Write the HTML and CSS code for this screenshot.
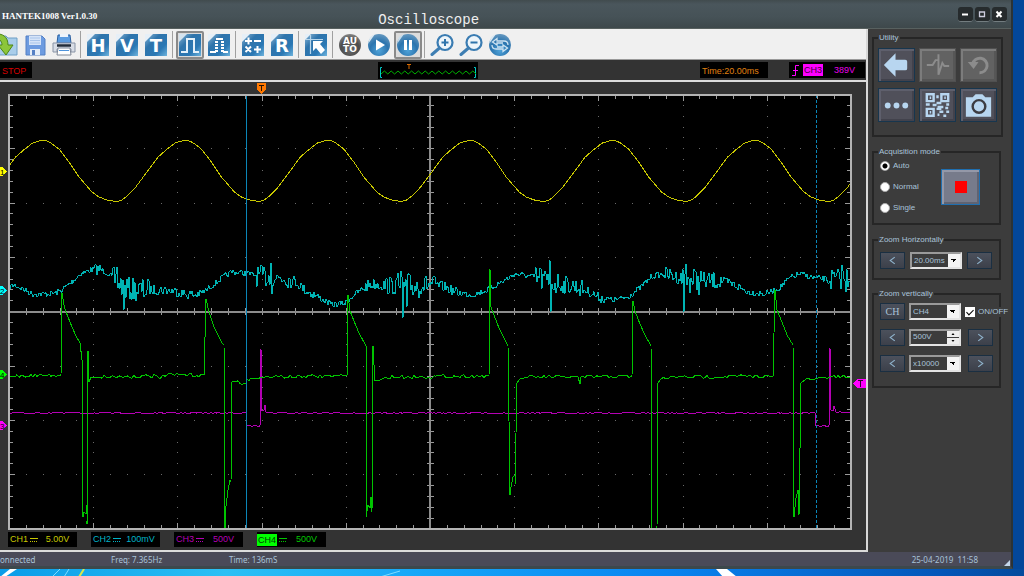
FILE: index.html
```html
<!DOCTYPE html>
<html lang="en">
<head>
<meta charset="utf-8">
<title>Oscilloscope</title>
<link rel="stylesheet" href="styles.css">
</head>
<body>
<svg class="defs" aria-hidden="true">
  <defs>
    <linearGradient id="tile" x1="0" y1="0" x2="1" y2="1">
      <stop offset="0" stop-color="#8fb9d8"/><stop offset=".35" stop-color="#2f74ab"/><stop offset=".7" stop-color="#2b78b4"/><stop offset="1" stop-color="#6fb4dd"/>
    </linearGradient>
    <radialGradient id="ball" cx=".5" cy=".75" r=".7">
      <stop offset="0" stop-color="#4fa3d9"/><stop offset=".6" stop-color="#2b74ae"/><stop offset="1" stop-color="#5d93bd"/>
    </radialGradient>
    <radialGradient id="greyball" cx=".5" cy=".7" r=".7">
      <stop offset="0" stop-color="#6a6a6a"/><stop offset=".6" stop-color="#4c4c4c"/><stop offset="1" stop-color="#858585"/>
    </radialGradient>
  </defs>
</svg>
<div class="window">
  <header class="titlebar">
    <span class="app-name">HANTEK1008 Ver1.0.30</span>
    <h1 class="title">Oscilloscope</h1>
    <div class="window-controls">
      <button class="win-btn" aria-label="Minimize"><svg viewBox="0 0 14 14"><path d="M4 7.500h6" stroke="#fff" stroke-width="2"/></svg></button>
      <button class="win-btn" aria-label="Maximize"><svg viewBox="0 0 14 14"><path d="M4.500 5h5v4.500h-5z" fill="none" stroke="#ccd" stroke-width="1.300"/></svg></button>
      <button class="win-btn" aria-label="Close"><svg viewBox="0 0 14 14"><path d="M4.500 4.500l5 5.500M9.500 4.500l-5 5.500" stroke="#fff" stroke-width="2"/></svg></button>
    </div>
  </header>

  <div class="body">
    <main class="main">
      <div class="toolbar" role="toolbar">
        <button class="tool" aria-label="Open"><svg viewBox="0 0 24 24"><path d="M2 3h10l2 2h9v17H2z" fill="#a9cdea" stroke="#6f9fc6"/><path d="M0 1c9-1 14 3 14 11h5l-7 10-8-10h4c0-4-3-7-8-7z" fill="#8cc63a" stroke="#4c8417"/></svg></button>
        <button class="tool" aria-label="Save"><svg viewBox="0 0 24 24"><path d="M3 3h16l3 3v16H3z" fill="#6d9be0" stroke="#5580c4"/><path d="M6 3h12v9H6z" fill="#d6e4f8"/><path d="M7 5h10M7 7.500h10M7 10h10" stroke="#a8c4ea"/><path d="M7 16h10v6H7z" fill="#e4edf8"/><path d="M9 17h3v5H9z" fill="#5580c4"/></svg></button>
        <button class="tool" aria-label="Print"><svg viewBox="0 0 24 24"><path d="M5 10l1-8h12l1 8z" fill="#5c9ce0" stroke="#2c5f9f"/><path d="M8 1h8v3H8z" fill="#eef4fb"/><path d="M1 10h22v9h-4v-3H5v3H1z" fill="#d8dde6" stroke="#8893a5"/><path d="M5 12.500h14" stroke="#222b38" stroke-width="2.500"/><path d="M6 15h12l1 7H5z" fill="#fff" stroke="#7e8796"/><path d="M7 17.500h10" stroke="#4f94dc"/></svg></button>
        <span class="sep"></span>
        <button class="tool" aria-label="Horizontal"><svg viewBox="0 0 24 24"><path d="M1 1h22v22H1z" fill="url(#tile)"/><path d="M1 1h8L1 9z" fill="#e6eff7"/><text class="glyph" x="12" y="19">H</text></svg></button>
        <button class="tool" aria-label="Vertical"><svg viewBox="0 0 24 24"><path d="M1 1h22v22H1z" fill="url(#tile)"/><path d="M1 1h8L1 9z" fill="#e6eff7"/><text class="glyph" x="12" y="19">V</text></svg></button>
        <button class="tool" aria-label="Trigger"><svg viewBox="0 0 24 24"><path d="M1 1h22v22H1z" fill="url(#tile)"/><path d="M1 1h8L1 9z" fill="#e6eff7"/><text class="glyph" x="12" y="19">T</text></svg></button>
        <span class="sep"></span>
        <button class="tool pressed" aria-label="Line display" aria-pressed="true"><svg viewBox="0 0 24 24"><path d="M1 1h22v22H1z" fill="url(#tile)"/><path d="M1 1h8L1 9z" fill="#d4e3ef"/><path d="M3 19h6V6h7v13h5" fill="none" stroke="#e4f1fa" stroke-width="2"/></svg></button>
        <button class="tool" aria-label="Dot display"><svg viewBox="0 0 24 24"><path d="M1 1h22v22H1z" fill="url(#tile)"/><path d="M1 1h8L1 9z" fill="#e6eff7"/><path d="M3 19h6M9 6h7M16 19h5" stroke="#fff" stroke-width="2"/><path d="M9.500 8v12M15.500 8v12" stroke="#fff" stroke-width="3" stroke-dasharray="2 1"/></svg></button>
        <span class="sep"></span>
        <button class="tool" aria-label="Math"><svg viewBox="0 0 24 24"><path d="M1 1h22v22H1z" fill="url(#tile)"/><path d="M1 1h8L1 9z" fill="#e6eff7"/><path d="M4 8h7M7.500 4.500v7M13 8h7M4.500 13.500l5.500 5.500M10 13.500l-5.500 5.500M13 16.500h7M16.500 13v7" stroke="#fff" stroke-width="2"/></svg></button>
        <button class="tool" aria-label="Reference"><svg viewBox="0 0 24 24"><path d="M1 1h22v22H1z" fill="url(#tile)"/><path d="M1 1h8L1 9z" fill="#e6eff7"/><text class="glyph" x="12" y="19">R</text></svg></button>
        <span class="sep"></span>
        <button class="tool" aria-label="Cursor"><svg viewBox="0 0 24 24"><path d="M1 1h22v22H1z" fill="url(#tile)"/><path d="M1 1h6L1 7z" fill="#e6eff7"/><path d="M1 6.500h18M6.500 2v19" stroke="#b7d6ec" stroke-width="1.200"/><path d="M9 8h10l-3 3 5 6-4 4-5-6-3 3z" fill="#fff"/></svg></button>
        <span class="sep"></span>
        <button class="tool" aria-label="Auto"><svg viewBox="0 0 24 24"><circle cx="12" cy="12" r="11" fill="url(#greyball)"/><text class="glyph small" x="12" y="11">AU</text><text class="glyph small" x="12" y="19">TO</text></svg></button>
        <button class="tool" aria-label="Run"><svg viewBox="0 0 24 24"><circle cx="12" cy="12" r="11" fill="url(#ball)"/><path d="M3 4l5-3-7 10z" fill="#dbe9f3"/><path d="M9 6.500l9 5.500-9 5.500z" fill="#fff"/></svg></button>
        <button class="tool pressed" aria-label="Pause" aria-pressed="true"><svg viewBox="0 0 24 24"><circle cx="12" cy="12" r="11" fill="url(#ball)"/><path d="M3 4l5-3-7 10z" fill="#c6dcec"/><path d="M9.500 7v10M14.500 7v10" stroke="#fff" stroke-width="3"/></svg></button>
        <span class="sep"></span>
        <button class="tool" aria-label="Zoom in"><svg viewBox="0 0 24 24"><circle cx="15" cy="9.500" r="7.500" fill="#eef5fa" stroke="#3a7cb2" stroke-width="2.200"/><path d="M9.500 15L2 21.500" stroke="#3f7fb3" stroke-width="3" stroke-linecap="round"/><path d="M11.500 9.500h7M15 6v7" stroke="#2f74ab" stroke-width="2"/></svg></button>
        <button class="tool" aria-label="Zoom out"><svg viewBox="0 0 24 24"><circle cx="15" cy="9.500" r="7.500" fill="#eef5fa" stroke="#3a7cb2" stroke-width="2.200"/><path d="M9.500 15L2 21.500" stroke="#3f7fb3" stroke-width="3" stroke-linecap="round"/><path d="M11.500 9.500h7" stroke="#2f74ab" stroke-width="2"/></svg></button>
        <button class="tool" aria-label="Swap"><svg viewBox="0 0 24 24"><circle cx="12" cy="12" r="11" fill="url(#ball)"/><path d="M3 4l5-3-7 10z" fill="#dbe9f3"/><path d="M20 12q0-4-4-4H9V5.500L4.500 9 9 12v-2h6M4 12q0 4 4 4h7v2.500l4.500-3.500-4.500-3v2H9" fill="none" stroke="#cfe4f2" stroke-width="1.300"/></svg></button>
      </div>

      <div class="infobar">
        <span class="chip stop">STOP</span>
        <svg class="overview" viewBox="0 0 100 17" role="img" aria-label="Record overview">
          <path d="M4 5.500H2.500v10H4M96 5.500h1.500v10H96" fill="none" stroke="#00c8c8"/>
          <path id="overview-wave" fill="none" stroke="#00b000"/>
          <path d="M29 2.500h4M31 3v4" stroke="#d86a00"/>
        </svg>
        <span class="chip time">Time:20.00ms</span>
        <span class="chip trigger">
          <svg class="edge" viewBox="0 0 10 14"><path d="M1 12.500h3.500v-10H8M2 7.500h5" fill="none" stroke="#f0f"/></svg>
          <b class="trig-ch">CH3</b><span>389V</span>
        </span>
      </div>

      <section class="scope">
        <svg class="plot" viewBox="0 82 866 449" role="img" aria-label="Waveforms">
          <rect x="8" y="94" width="844" height="436" fill="#000"/>
          <path id="grid-dots" stroke="#6a6a6a"/>
          <path id="ticks" stroke="#9a9a9a"/>
          <path d="M8 311.500h844M430 94v436" stroke="#8c8c8c" stroke-width="2"/>
          <path id="trace1" class="trace" stroke="#c8c800"/>
          <path id="trace2" class="trace" stroke="#00b4b4"/>
          <path id="trace3" class="trace" stroke="#b400b4"/>
          <path id="trace4" class="trace" stroke="#00c400"/>
          <path d="M246.500 95v434" stroke="#0b86b8"/>
          <path d="M816.500 95v434" stroke="#0b86b8" stroke-dasharray="3 2"/>
          <path d="M9 94v436M851 94v436M8 95h844M8 529h844" stroke="#b4b4b4" stroke-width="2"/>
          <path d="M257 83h9v7l-4.500 4-4.500-4z" fill="#ff7800"/><path d="M259 85.500h5M261.500 86v5" stroke="#2a1400"/>
          <path d="M0 167h3l4 4.500-4 4.500H0z" fill="#ff0"/><text class="mark" x="0" y="175">1</text>
          <path d="M0 286h3l4 4.500-4 4.500H0z" fill="#0ff"/><text class="mark" x="0" y="294">2</text>
          <path d="M0 370h3l4 4.500-4 4.500H0z" fill="#0f0"/><text class="mark" x="0" y="378">4</text>
          <path d="M0 421h3l4 4.500-4 4.500H0z" fill="#f0f"/><text class="mark" x="0" y="429">3</text>
          <path d="M866 379h-9l-4 4.500 4 4.500h9z" fill="#f0f"/><path d="M858 380.500h5M860.500 381v6" stroke="#300030"/>
        </svg>
        <div class="channels">
          <span class="chip ch ch1"><span>CH1</span><svg class="dc" viewBox="0 0 8 6"><path d="M0 1.500h8" stroke="currentColor"/><path d="M0 4.500h8" stroke="currentColor" stroke-dasharray="1 1"/></svg><span class="volt">5.00V</span></span>
          <span class="chip ch ch2"><span>CH2</span><svg class="dc" viewBox="0 0 8 6"><path d="M0 1.500h8" stroke="currentColor"/><path d="M0 4.500h8" stroke="currentColor" stroke-dasharray="1 1"/></svg><span class="volt">100mV</span></span>
          <span class="chip ch ch3"><span>CH3</span><svg class="dc" viewBox="0 0 8 6"><path d="M0 1.500h8" stroke="currentColor"/><path d="M0 4.500h8" stroke="currentColor" stroke-dasharray="1 1"/></svg><span class="volt">500V</span></span>
          <span class="chip ch ch4"><span class="active">CH4</span><svg class="dc" viewBox="0 0 8 6"><path d="M0 1.500h8" stroke="currentColor"/><path d="M0 4.500h8" stroke="currentColor" stroke-dasharray="1 1"/></svg><span class="volt">500V</span></span>
        </div>
      </section>
    </main>

    <aside class="side">
      <fieldset class="group utility">
        <legend>Utility</legend>
        <div class="util-grid">
          <button class="util" aria-label="Back"><svg viewBox="0 0 36 32"><path d="M5 16L17 4v6.500h10q2 0 2 2v7q0 2-2 2H17V28z" fill="#b8d6f0"/></svg></button>
          <button class="util off" aria-label="Measure" disabled><svg viewBox="0 0 36 32"><path d="M7 16h6l3-5 3 0V5v21l4-12 2 3h5" fill="none" stroke="#8c8c8c" stroke-width="2"/></svg></button>
          <button class="util off" aria-label="Undo" disabled><svg viewBox="0 0 36 32"><path d="M12 15a7.500 7.500 0 1 1 7 9" fill="none" stroke="#8c8c8c" stroke-width="3"/><path d="M7 13h11l-5 7z" fill="#8c8c8c"/></svg></button>
          <button class="util" aria-label="More"><svg viewBox="0 0 36 32"><g fill="#b8d6f0"><circle cx="9" cy="16.500" r="3"/><circle cx="18" cy="16.500" r="3"/><circle cx="27" cy="16.500" r="3"/></g></svg></button>
          <button class="util" aria-label="QR code"><svg viewBox="0 0 36 32"><g fill="none" stroke="#b8d6f0" stroke-width="2.500"><path d="M7 5h7v7H7zM22 5h7v7h-7zM7 20h7v7H7z"/><path d="M10 8.500h1.500M25 8.500h1.500M10 23.500h1.500M18 6v3M6 15.500h4M13 16h4M17 14h5M18 18h6M27 15.500h3M17 20h5M26 19h3M20 23h4M18 26h2M24 27h3M27 23h3"/></g></svg></button>
          <button class="util" aria-label="Screenshot"><svg viewBox="0 0 36 32"><path d="M5 8h7l3-3h7l3 3h6v20H5z" fill="#b8d6f0"/><circle cx="18.500" cy="17.500" r="6.500" fill="#b8d6f0" stroke="#3c3c42" stroke-width="2.500"/></svg></button>
        </div>
      </fieldset>

      <fieldset class="group acq">
        <legend>Acquisition mode</legend>
        <div class="modes">
          <label class="mode"><input type="radio" name="mode" checked>Auto</label>
          <label class="mode"><input type="radio" name="mode">Normal</label>
          <label class="mode"><input type="radio" name="mode">Single</label>
        </div>
        <button class="stop-btn" aria-label="Stop"><span class="stop-square"></span></button>
      </fieldset>

      <fieldset class="group zoom">
        <legend>Zoom Horizontally</legend>
        <div class="row">
          <button class="step" aria-label="Faster"><svg viewBox="0 0 8 8"><path d="M6 1L2 4l4 3" fill="none" stroke="#8fb3cc"/></svg></button>
          <select class="field" aria-label="Time base"><option>20.00ms</option></select>
          <button class="step" aria-label="Slower"><svg viewBox="0 0 8 8"><path d="M2 1l4 3-4 3" fill="none" stroke="#8fb3cc"/></svg></button>
        </div>
      </fieldset>

      <fieldset class="group zoom vertical">
        <legend>Zoom vertically</legend>
        <div class="row">
          <button class="step ch-btn">CH</button>
          <select class="field" aria-label="Channel"><option>CH4</option></select>
          <label class="onoff"><input type="checkbox" checked>ON/OFF</label>
        </div>
        <div class="row">
          <button class="step" aria-label="Volts down"><svg viewBox="0 0 8 8"><path d="M6 1L2 4l4 3" fill="none" stroke="#8fb3cc"/></svg></button>
          <span class="field spin"><input class="spin-input" type="text" value="500V" aria-label="Volts per division"><span class="spin-btns"><button class="spin-btn" aria-label="Up"><svg viewBox="0 0 8 4"><path d="M2.500 3L4 1l1.500 2z"/></svg></button><button class="spin-btn" aria-label="Down"><svg viewBox="0 0 8 4"><path d="M2.500 1L4 3l1.500-2z"/></svg></button></span></span>
          <button class="step" aria-label="Volts up"><svg viewBox="0 0 8 8"><path d="M2 1l4 3-4 3" fill="none" stroke="#8fb3cc"/></svg></button>
        </div>
        <div class="row">
          <button class="step" aria-label="Probe down"><svg viewBox="0 0 8 8"><path d="M6 1L2 4l4 3" fill="none" stroke="#8fb3cc"/></svg></button>
          <select class="field" aria-label="Probe factor"><option>x10000</option></select>
          <button class="step" aria-label="Probe up"><svg viewBox="0 0 8 8"><path d="M2 1l4 3-4 3" fill="none" stroke="#8fb3cc"/></svg></button>
        </div>
      </fieldset>
    </aside>
  </div>

  <footer class="status">
    <span class="connection">onnected</span>
    <span class="freq">Freq: 7.365Hz</span>
    <span>Time: 136mS</span>
    <time class="clock">25-04-2019&nbsp; 11:58</time>
    <svg class="grip" viewBox="0 0 6 6"><path d="M6 0v6H0z" fill="#c3d6ea"/></svg>
  </footer>
</div>
<svg class="wallpaper" viewBox="0 0 1024 8" preserveAspectRatio="none" aria-hidden="true">
  <path d="M0 8L10 0h7L5 8zM716 0h11l10 8h-14z" fill="#fff"/>
  <path d="M52 8l8-8M64 8l5-8M380 8l20-6" stroke="#7fdcff"/>
  <path d="M79 8l5-8" stroke="#d8e84a" stroke-width="2"/>
  <path d="M0 7.500h1024" stroke="#2a6b9a"/>
</svg>
<script src="scope.js"></script>
</body>
</html>
```
FILE: styles.css
```css
* { box-sizing: border-box; }

body {
  margin: 0;
  min-height: 100vh;
  display: flex;
  flex-direction: column;
  background: linear-gradient(90deg, #0a9ce8 0%, #2cc0f4 22%, #18a8f8 40%, #0a84f0 65%, #0456b8 92%, #034a9c 100%);
  font-family: "Liberation Sans", sans-serif;
  font-size: 8px;
  line-height: 10px;
  color: #a9c3d9;
  overflow: hidden;
}

button { font: inherit; color: inherit; padding: 0; border: 0; background: none; }
svg { display: block; }
.defs { position: absolute; width: 0; height: 0; }

.window {
  margin-right: 11px;
  flex: 1;
  display: flex;
  flex-direction: column;
  background: #3c3c3c;
  border-right: 2px solid #2c3335;
  border-bottom: 3px solid #3c484c;
  box-shadow: 11px 0 0 #03479a;
}

.titlebar {
  display: flex;
  align-items: center;
  height: 29px;
  padding: 3px 4px 0 1px;
  background: linear-gradient(#414b4e, #4a565c 15%, #465257 60%, #3e484b);
  border-bottom: 1px solid #58605f;
}
.app-name {
  flex: 0 0 37%;
  padding-left: 1px;
  font: bold 9px/12px "Liberation Serif", serif;
  color: #fff;
  white-space: nowrap;
}
.title { margin: 8px 0 0 5px; font: 14px/16px "Liberation Mono", monospace; color: #eee; }
.window-controls { display: flex; gap: 2px; margin: 0 0 3px auto; }
.win-btn { width: 15px; height: 15px; background: #262b2d; border-radius: 3px; border-bottom: 1px solid #737d80; }
.win-btn svg { width: 14px; height: 14px; }

.body { display: flex; flex: 1; }
.main { flex: 1; min-width: 0; display: flex; flex-direction: column; border-right: 2px solid #d8d8d8; background: #333; }

.toolbar {
  display: flex;
  gap: 1px;
  align-items: center;
  height: 31px;
  padding: 1px 0 0;
  background: #f0f0f0;
  border-bottom: 1px solid #9a9a9a;
  overflow: hidden;
}
.tool { flex: 0 0 28px; height: 28px; display: flex; align-items: center; justify-content: center; }
.tool:first-child { margin-left: -8px; }
.tool svg { width: 24px; height: 24px; flex: none; }
.pressed { border: 2px solid #8a8a8a; border-radius: 2px; background: #dcdcdc; }
.sep { flex: 0 0 4px; height: 27px; background: linear-gradient(90deg, transparent 1px, #a0a0a0 1px, #a0a0a0 2px, transparent 2px); }
.glyph { font: bold 18px "DejaVu Sans", sans-serif; fill: #fff; text-anchor: middle; }
.glyph.small { font-size: 9px; }

.infobar { display: flex; align-items: center; height: 22px; padding-right: 1px; border-bottom: 2px solid #dcdcdc; }
.chip { font: 9px/18px "Liberation Sans", sans-serif; height: 16px; padding: 0 2px; background: #000; white-space: nowrap; }
.stop { width: 32px; color: #d80000; }
.overview { width: 100px; height: 17px; margin-left: 40%; background: #000; }
.time { width: 68px; margin-left: auto; color: #e08010; }
.trigger { display: flex; align-items: center; width: 76px; margin-left: 21px; color: #e800e8; }
.edge { width: 10px; height: 14px; margin: 0 2px 0 0; }
.trig-ch { margin-right: 11px; padding: 0 1px; background: #f0f; color: #400040; font-weight: normal; line-height: 12px; }

.scope { flex: 1; border-bottom: 2px solid #dcdcdc; }
.plot { width: 100%; height: auto; shape-rendering: crispEdges; }
.trace { fill: none; stroke-width: 1; }
.mark { font: 8px "Liberation Sans", sans-serif; fill: #000; }
.channels { display: flex; gap: 14px; padding: 1px 8px 3px; }
.ch { display: flex; align-items: center; width: 69px; height: 15px; line-height: 15px; }
.dc { width: 8px; height: 6px; margin: 0 2px 0 2px; }
.volt { flex: 1; text-align: center; }
.ch1 { color: #c8c800; }
.ch2 { color: #00b4c8; }
.ch3 { color: #b400b4; }
.ch4 { color: #00c800; padding-left: 0; }
.active { padding: 0 1px; background: #0f0; color: #004400; line-height: 12px; }

.side { flex: 0 0 143px; min-width: 0; display: flex; flex-direction: column; gap: 10px; padding: 4px 10px 0 4px; }
.group { margin: 0; min-width: 0; border: 2px solid #262626; padding: 5px 4px; }
.group legend { margin-left: 0; padding: 0 1px; line-height: 10px; white-space: nowrap; }
.group.utility { padding-bottom: 13px; margin-right: -2px; }
.util-grid { display: grid; grid-template-columns: repeat(3, 37px); gap: 6px 4px; }
.util { height: 34px; background: #50505a; border: 1px solid #17364e; box-shadow: inset 2px 2px #5e5f6c, inset -2px -2px #42424c; display: flex; align-items: center; justify-content: center; }
.util svg { width: 35px; height: 32px; }
.off { background: #626262; border-color: #505050; box-shadow: inset 2px 2px #7c7c7c, inset -2px -2px #565656; }

.group.acq { display: flex; justify-content: space-between; align-items: center; padding: 4px 19px 10px 6px; }
.acq legend, .zoom legend { margin-left: -2px; }
.modes { display: flex; flex-direction: column; gap: 11px; }
.mode { display: flex; align-items: center; gap: 3px; }
.mode input { appearance: none; width: 10px; height: 10px; margin: 0; border-radius: 50%; background: #fff; border: 1px solid #aaa; }
.mode input:checked { background: radial-gradient(#000 0 2px, #fff 3px); }
.stop-btn { width: 39px; height: 36px; display: flex; align-items: center; justify-content: center; background: #777b8b; border: 1px solid #1f6fb0; box-shadow: inset 2px 2px #9498a8, inset -2px -2px #5f6372; }
.stop-square { width: 12px; height: 12px; background: #f00; }

.group.zoom { padding: 6px 6px 9px; }
.row { display: flex; align-items: center; gap: 5px; height: 18px; }
.step { flex: 0 0 25px; height: 17px; display: flex; align-items: center; justify-content: center; background: linear-gradient(#4c515c, #3c404a); border: 1px solid #1a2f42; }
.step svg { width: 9px; height: 9px; }
.ch-btn { font: 10px/12px "Liberation Serif", serif; }
.field {
  appearance: none;
  width: 52px;
  height: 17px;
  margin: 0;
  padding: 0 0 0 2px;
  border: 2px solid #e4e4e4;
  border-top-color: #9a9a9a;
  border-left-color: #9a9a9a;
  border-radius: 0;
  font: 8px/14px "Liberation Sans", sans-serif;
  color: #a9c3d9;
  background: linear-gradient(45deg, transparent 50%, #000 50%) right 6px center / 3px 3px no-repeat,
    linear-gradient(-45deg, transparent 50%, #000 50%) right 3px center / 3px 3px no-repeat,
    linear-gradient(#f4f4f4, #f4f4f4) right / 12px 100% no-repeat, #3c3c3c;
}
.group.vertical { display: flex; flex-direction: column; margin-top: -1px; padding: 0 6px 10px; }
.vertical .row { height: 26px; gap: 4px; }
.vertical .row:first-of-type { height: 25px; }
.vertical .step:last-child { margin-left: 3px; }
.onoff { flex: none; display: flex; align-items: center; gap: 3px; margin-right: -16px; background: #3c3c3c; }
.onoff input { appearance: none; width: 10px; height: 10px; margin: 0; background: #fff; }
.onoff input:checked::before { content: ""; display: block; width: 3px; height: 6px; margin: 1px 0 0 3px; border: solid #000; border-width: 0 1px 1px 0; transform: rotate(45deg); }
.field.spin { display: flex; background: #3c3c3c; }
.spin-input { flex: 1; min-width: 0; padding: 0; border: 0; background: none; color: inherit; font: inherit; }
.spin-btns { flex: 0 0 12px; display: flex; flex-direction: column; gap: 1px; }
.spin-btn { flex: 1; background: #eee; }
.spin-btn svg { width: 8px; height: 4px; margin: 0 auto; }

.status { display: flex; align-items: center; height: 14px; background: #4a4a58; padding: 1px 1px 0 0; font: 8px/12px "Noto Sans", sans-serif; }
.connection { width: 11%; }
.freq { width: 118px; }
.clock { margin-left: auto; }
.grip { width: 6px; height: 6px; margin: 7px 0 0 26px; }
.wallpaper { width: 100%; height: 8px; }
```
FILE: scope.js
```javascript
const LEFT = 9, RIGHT = 851, TOP = 95, BOTTOM = 529;
const DIV_X = 84.2, DIV_Y = 54.3;

let seed = 7;
function rand() {
  seed = (seed * 16807) % 2147483647;
  return seed / 2147483647 * 2 - 1;
}

function interpolate(points, x) {
  for (let i = 1; i < points.length; i++) {
    if (x <= points[i][0]) {
      const [x0, y0] = points[i - 1], [x1, y1] = points[i];
      return y0 + (y1 - y0) * (x - x0) / (x1 - x0 || 1);
    }
  }
  return points[points.length - 1][1];
}

function setPath(id, points) {
  const d = points.map(([x, y]) => x.toFixed(1) + " " + y.toFixed(1)).join("L");
  document.getElementById(id).setAttribute("d", "M" + d);
}

// Graticule: dots on the division lines, ticks on the frame and both axes.
let dots = "", ticks = "";
for (let i = 1; i < 50; i++) {
  const x = Math.round(LEFT + i * DIV_X / 5);
  const len = i % 5 ? 4 : 6;
  ticks += `M${x}.5 ${TOP}v${len}M${x}.5 ${BOTTOM}v-${len}M${x}.5 308v7`;
  for (let j = 1; j < 8; j++) dots += `M${x} ${Math.round(94 + j * DIV_Y)}.5h1`;
}
for (let j = 1; j < 40; j++) {
  const y = Math.round(94 + j * DIV_Y / 5);
  const len = j % 5 ? 4 : 6;
  ticks += `M${LEFT} ${y}.5h${len}M${RIGHT} ${y}.5h-${len}M427 ${y}.5h7`;
  for (let i = 1; i < 10; i++) dots += `M${Math.round(LEFT + i * DIV_X)} ${y}.5h1`;
}
document.getElementById("grid-dots").setAttribute("d", dots);
document.getElementById("ticks").setAttribute("d", ticks);

// CH1: one cycle measured from its peak.
const PERIOD = 142.4;
const cycle = [[0, 140.5], [6, 141], [10, 143], [18, 149], [28, 162], [38, 177], [51, 192], [58, 197],
  [66, 200], [72, 201], [78, 201], [81, 200], [86, 196], [94, 188], [103, 176], [117, 157], [125, 150], [134, 143], [PERIOD, 140.5]];
const ch1 = [];
for (let x = LEFT; x <= RIGHT; x++) ch1.push([x, interpolate(cycle, (x - 41 + PERIOD) % PERIOD)]);
setPath("trace1", ch1);

// CH2: slow ripple with bursts of noise.
const ripple = [[9, 287], [15, 285], [27, 291], [33, 294], [45, 294], [55, 293], [62, 290], [72, 282], [80, 274],
  [90, 270], [99, 269], [108, 273], [115, 280], [125, 288], [135, 290], [165, 290], [175, 291], [185, 294], [195, 295],
  [205, 291], [213, 285], [222, 278], [232, 272], [246, 273], [258, 276], [270, 277], [285, 278], [295, 281],
  [305, 290], [320, 298], [332, 305], [345, 303], [355, 294], [370, 284], [385, 285], [405, 287], [430, 284],
  [445, 287], [455, 292], [472, 295], [485, 291], [500, 283], [515, 274], [530, 276], [545, 281], [560, 284],
  [575, 286], [590, 292], [600, 298], [615, 300], [628, 297], [640, 288], [652, 276], [665, 274], [685, 279],
  [700, 281], [720, 281], [735, 285], [748, 292], [765, 294], [778, 289], [790, 278], [800, 274], [815, 278], [835, 280], [851, 277]];
const bursts = [[94, 102, 6], [113, 150, 12], [150, 200, 5], [257, 272, 11], [272, 292, 9], [292, 320, 5], [365, 385, 6],
  [385, 396, 9], [396, 420, 14], [420, 436, 10], [436, 460, 5], [534, 560, 13], [560, 585, 9], [585, 605, 5],
  [665, 683, 7], [683, 704, 14], [704, 722, 9], [722, 745, 5], [828, 851, 11]];
const spikes = { 117: 267, 124: 310, 271: 263, 272: 294, 401: 271, 403: 318, 407: 307, 540: 268, 550: 260,
  551: 312, 684: 312, 686: 264, 842: 265, 846: 292 };
const ch2 = [];
for (let x = LEFT; x <= RIGHT; x++) {
  const burst = bursts.find(b => x >= b[0] && x < b[1]);
  ch2.push([x, spikes[x] || interpolate(ripple, x) + rand() * (burst ? burst[2] : 3)]);
}
setPath("trace2", ch2);

// Fills the flat stretches between pulses with small noise.
function addNoise(points, amplitude) {
  const out = [points[0]];
  for (let i = 1; i < points.length; i++) {
    const [x0] = points[i - 1], [x1, y1] = points[i];
    for (let x = x0 + 2; x < x1 - 2; x += 2) {
      if (x1 - x0 > 8) out.push([x, interpolate([points[i - 1], points[i]], x) + rand() * amplitude]);
    }
    out.push([x1, y1]);
  }
  return out;
}

setPath("trace3", addNoise([[9, 413], [246, 413], [247, 426], [260, 426], [261, 349], [262, 410], [264, 410], [265, 405],
  [266, 412], [268, 413], [815, 413], [816, 426], [829, 426], [830, 348], [831, 410], [833, 411], [834, 406], [836, 412], [851, 413]], 0.5));

setPath("trace4", addNoise([[9, 376], [61, 375], [62, 293], [64, 305], [66, 312], [72, 327], [76, 336], [80, 343], [82, 360],
  [82, 505], [83, 517], [84, 512], [86, 514], [87, 505], [87, 524], [88, 351], [89, 382], [91, 377], [96, 377],
  [157, 376], [160, 379], [163, 375], [204, 375], [206, 299], [209, 312], [214, 327], [219, 337], [222, 343], [224, 345],
  [225, 529], [226, 506], [228, 490], [230, 480], [231, 482], [232, 382], [246, 383], [247, 379], [257, 379],
  [262, 377], [347, 376], [348, 295], [350, 311], [354, 321], [359, 333], [366, 346], [366, 517], [368, 505],
  [370, 508], [371, 497], [372, 512], [373, 346], [374, 365], [375, 381], [380, 380], [386, 377], [489, 376],
  [490, 269], [491, 307], [494, 315], [499, 328], [504, 338], [508, 346], [510, 495], [511, 487], [513, 477],
  [515, 475], [515, 484], [517, 383], [520, 379], [528, 377], [578, 377], [580, 384], [581, 377], [632, 376],
  [633, 301], [635, 311], [640, 324], [645, 335], [651, 346], [652, 528], [657, 528], [658, 383], [661, 379],
  [675, 377], [773, 376], [775, 290], [777, 310], [782, 322], [787, 335], [793, 345], [794, 517], [796, 498],
  [798, 490], [799, 515], [801, 383], [805, 380], [815, 379], [830, 377], [851, 377]], 1.8));

const overview = [];
for (let i = 0; i <= 28; i++) overview.push([3 + i * 3.4, i % 2 ? 9 : 12]);
setPath("overview-wave", overview);
```
